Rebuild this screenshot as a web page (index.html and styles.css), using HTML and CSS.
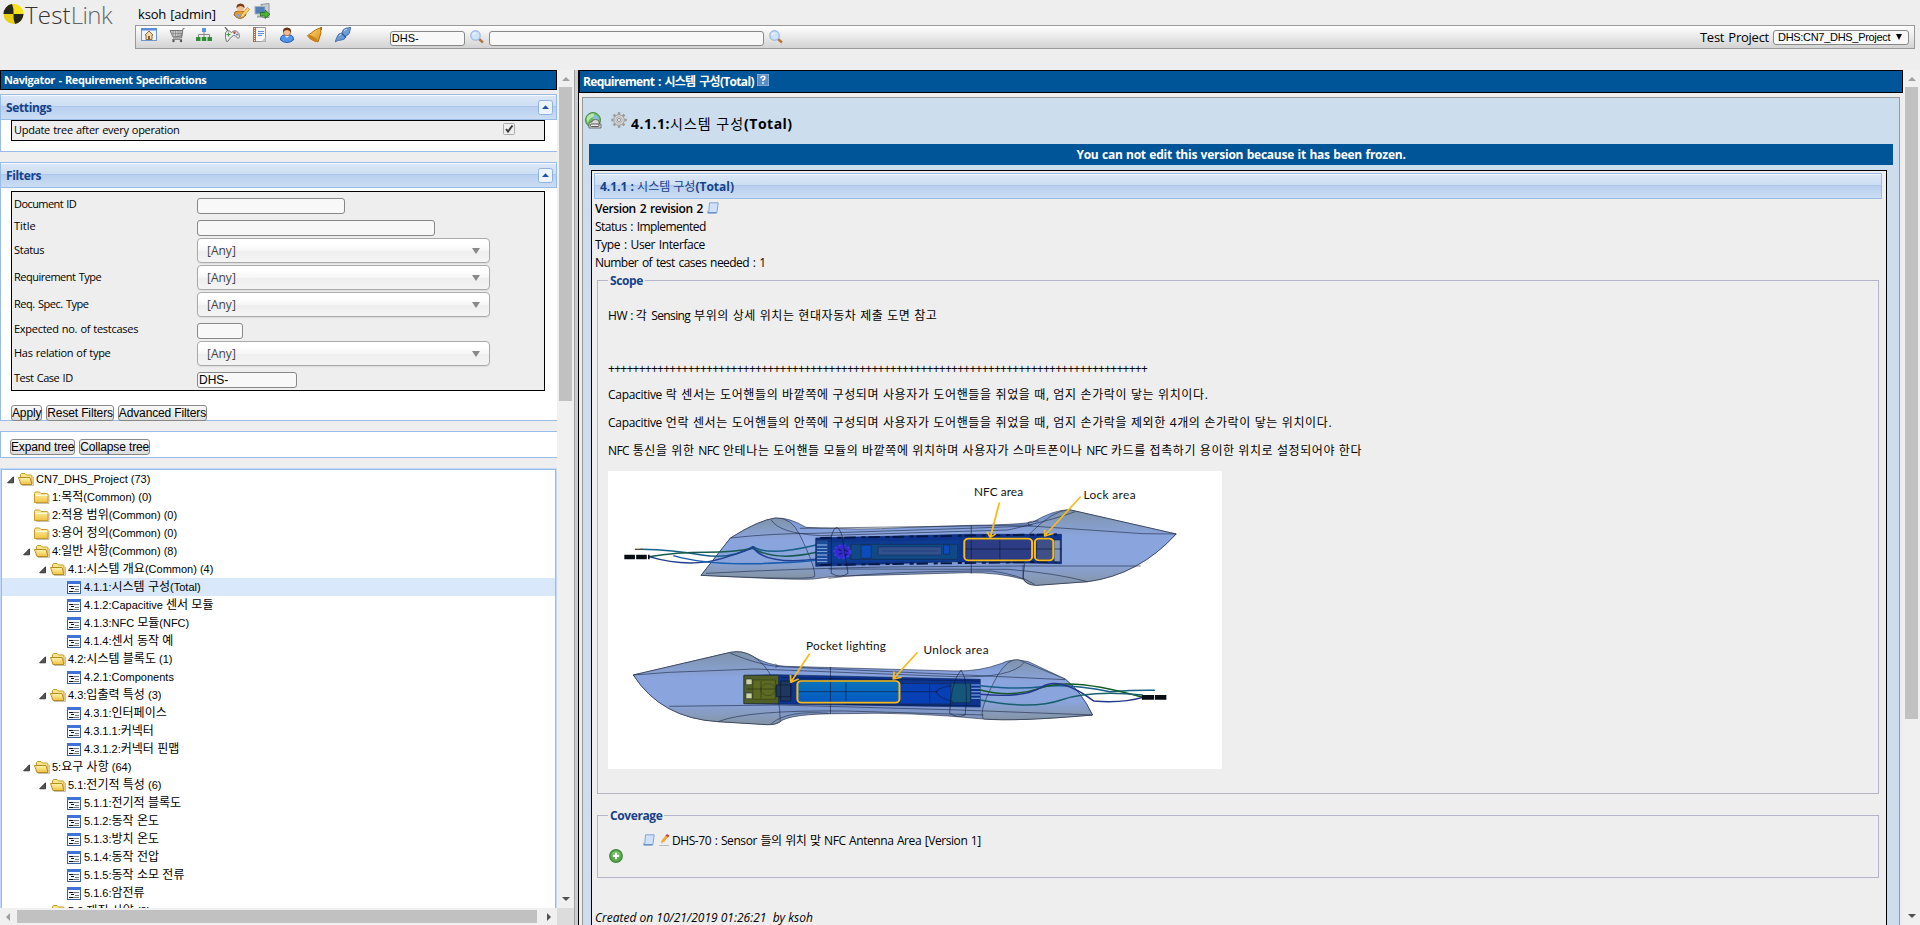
FILE: index.html
```html
<!DOCTYPE html>
<html lang="ko">
<head>
<meta charset="utf-8">
<title>TestLink</title>
<link rel="stylesheet" href="styles.css">
</head>
<body>
<svg width="0" height="0" class="defs">
  <defs>
    <linearGradient id="gFold" x1="0" y1="0" x2="0" y2="1"><stop offset="0" stop-color="#fff3b0"/><stop offset="1" stop-color="#f0c340"/></linearGradient>
    <linearGradient id="gBody" x1="0" y1="0" x2="0" y2="1"><stop offset="0" stop-color="#7391c9"/><stop offset=".45" stop-color="#92abe6"/><stop offset=".75" stop-color="#7f99d2"/><stop offset="1" stop-color="#8496b0"/></linearGradient>
    <linearGradient id="gTip" x1="0" y1="0" x2="0" y2="1"><stop offset="0" stop-color="#7f93a8"/><stop offset=".35" stop-color="#8aa4dd"/><stop offset=".7" stop-color="#8aa4dd"/><stop offset="1" stop-color="#8494a4"/></linearGradient>
    <linearGradient id="gBlue" x1="0" y1="0" x2="0" y2="1"><stop offset="0" stop-color="#0a74b8"/><stop offset="1" stop-color="#0558c4"/></linearGradient>
    <linearGradient id="gBell" x1="0" y1="0" x2="1" y2="1"><stop offset="0" stop-color="#ffe07a"/><stop offset="1" stop-color="#d88a12"/></linearGradient>
    <symbol id="folder" viewBox="0 0 16 14"><path d="M.5 12.500v-9q0-1.500 1.500-1.500h3.500l1.500 1.500h5.500q1.500 0 1.500 1v8z" fill="url(#gFold)" stroke="#c69a2b"/><path d="M1.500 5.500h12" stroke="#fffbe0"/><path d="M2 13.500h13V5" fill="none" stroke="#8a8460" stroke-opacity=".5"/></symbol>
    <symbol id="open" viewBox="0 0 16 14"><path d="M2.500 11.500V3q0-1 1-1.500h3.500l1.500 1.500h4.500q1 0 1 1v8" fill="#fbe58a" stroke="#c69a2b"/><path d="M.5 5.500h11.500l2 7H3z" fill="url(#gFold)" stroke="#b98c20"/><path d="M4 13.500h11.500V5" fill="none" stroke="#8a8460" stroke-opacity=".5"/></symbol>
    <symbol id="doc" viewBox="0 0 14 13"><rect x=".5" y=".5" width="13" height="12" fill="#f4f8ff" stroke="#3a5f9f"/><rect x="0" y="0" width="14" height="3" fill="#3f73d8"/><path d="M2 5.500h4M2 10.500h4M4 7.500h3" stroke="#111"/><path d="M6 5.500h6M8 8.500h4M6 10.500h6" stroke="#777"/></symbol>
    <symbol id="tri" viewBox="0 0 8 8"><path d="M6.500.8v6H.6z" fill="#555" stroke="#222" stroke-width=".8"/></symbol>
    <symbol id="mag" viewBox="0 0 14 14"><path d="M9 9l4 3.500" stroke="#b8763a" stroke-width="2.400"/><circle cx="5.500" cy="5.500" r="4.700" fill="#cfe3fb" stroke="#9dbde8" stroke-width="1.400"/><path d="M3 5q.5-2 2.500-2" stroke="#fff" fill="none"/></symbol>
    <symbol id="scroll" viewBox="0 0 12 12"><path d="M2.500 .8h8.700L9.800 11H.8V9.300h1z" fill="#cfe2fb" stroke="#82a5d2"/><path d="M.8 10.800h8.500" stroke="#557fb5"/></symbol>
    <symbol id="person" viewBox="0 0 16 16"><path d="M1.500 13q0-5 4-5h5q4 0 4 5-3 2.500-6.500 2.500T1.500 13z" fill="#5594e6" stroke="#1d5cb8"/><path d="M5.500 8.500L8 11l2.500-2.500" fill="#dbeaff"/><circle cx="8" cy="5" r="3.700" fill="#f2be93" stroke="#9a5526" stroke-width=".7"/><path d="M4 5.500Q3.500 .8 8 .6q4.500.2 4 4.900-1-2.500-4-2.500T4 5.500z" fill="#6a3413"/></symbol>
  </defs>
</svg>

<header class="top">
  <div class="brand">
    <svg width="24" height="24" viewBox="0 0 24 24"><circle cx="10.500" cy="12" r="10" fill="#e9cf14"/><path d="M10.500 12V2A10 10 0 0 1 20.500 12z" fill="#f6e21c"/><path d="M10.500 12H.5A10 10 0 0 1 9 2.100q2 5 1.500 9.900zM10.500 12h10A10 10 0 0 1 12 21.900q-2-5-1.500-9.900z" fill="#27261c"/></svg>
    <span class="brand-a">Test</span><span class="brand-b">Link</span>
  </div>
  <div class="top-main">
    <div class="user-row">
      <span class="user">ksoh [admin]</span>
      <svg width="17" height="17" viewBox="0 0 17 17"><g transform="translate(-.5 0)"><path d="M1.500 12q0-4 4-4h4q4 0 4 4-3 3.500-6 3.500T1.500 12z" fill="#e29a35" stroke="#a8651a"/><circle cx="8" cy="4.700" r="3.500" fill="#f2be93"/><path d="M4 5.500Q3.500 .8 8 .6q4.500.2 4 4.900-1-2.500-4-2.500T4 5.500z" fill="#7a3c12"/><path d="M3 12q3 4 6 3l-1-4z" fill="#78a8e8"/></g><path d="M7 15l1-3 6.500-7.500 2 2L10 14z" fill="#ffd56a" stroke="#c5780f" stroke-width=".7"/></svg>
      <svg class="logout" width="17" height="17" viewBox="0 0 17 17"><path d="M7 1.500l8-1v14H8z" fill="#c9ced3" stroke="#8d9399"/><rect x="1" y="3.500" width="10" height="7.500" fill="#4f7fb8" stroke="#aab2ba"/><path d="M3 13.500h6" stroke="#9da3a8" stroke-width="2"/><path d="M6.500 9.500h4.500V7l5 4.300-5 4.200v-2.500H6.500z" fill="#4cb03b" stroke="#25701d" stroke-width=".8"/></svg>
    </div>
    <div class="menu">
      <div class="icons">
        <svg viewBox="0 0 16 16"><rect x=".5" y="1.500" width="15" height="12" fill="#eef4fc" stroke="#6f97d3"/><rect x="0" y="1" width="16" height="2.500" fill="#5e8cd6"/><path d="M8 4l-4 4h1v4.500h6V8h1z" fill="#f3d9a6" stroke="#8a5c2b" stroke-width=".9"/><path d="M7 9h2v3.500H7z" fill="#8a5c2b"/></svg>
        <svg viewBox="0 0 16 16"><path d="M15.500 1.500H14L12.500 11H4M1 3.500h12.500L12.800 9 4 10z" fill="#ccc" stroke="#777"/><path d="M4 4v5M6.500 4v5M9 4v5M11 4v5M2 6.500h11" stroke="#888" stroke-width=".8"/><path d="M3 12.500h10" stroke="#888"/><circle cx="4.500" cy="14" r="1.200" fill="#555"/><circle cx="12" cy="14" r="1.200" fill="#555"/></svg>
        <svg viewBox="0 0 16 16"><path d="M8 4v3M2.500 10V7.500h11V10M8 7v3" fill="none" stroke="#8a8a8a"/><rect x="6" y="1" width="4" height="4" fill="#5e96e6"/><path d="M0 10h4.500v4H0zM5.800 10h4.500v4H5.800zM11.500 10H16v4h-4.500z" fill="#2f8d35"/></svg>
        <svg viewBox="0 0 16 16"><path d="M1 0l3 4" stroke="#666" stroke-width="1.300"/><path d="M1.500 5.500q2-2.500 4-1.500l2 1.500q2-2.500 5-1.500 3 2 3 5.500-.5 2.500-2 1.500Q11.500 8 9.500 8.500q-2 1-4 3.500-1.500 3-3 2.500-1.500-3.500-1-9z" fill="#ececec" stroke="#777"/><path d="M2.500 7.500h4M4.500 5.500v4" stroke="#45984a" stroke-width="1.200"/><circle cx="10.500" cy="5.800" r="1.200" fill="#c63d35"/><circle cx="13" cy="7.500" r="1" fill="#4d7bc9"/></svg>
        <svg viewBox="0 0 16 16"><path d="M1.500 .5h12v14h-12z" fill="#f7f7f7" stroke="#999"/><rect x="1" y="0" width="3" height="15" fill="#b5713c"/><path d="M2.500 1v13" stroke="#f0d8c0" stroke-dasharray="1 1"/><path d="M6 4.500h6M6 6.500h6M6 8.500h4" stroke="#5d8fdd"/><path d="M13.500 10l-4 4.500h4z" fill="#ccc"/></svg>
        <svg viewBox="0 0 16 16"><use href="#person"/></svg>
        <svg viewBox="0 0 16 16"><path d="M13.500 .8q-6 2-9 5-2 1.500-4 2.700 2 4.500 10.500 6.500l1-3Q15 6 13.500.8z" fill="url(#gBell)" stroke="#b46e12"/><ellipse cx="6" cy="11.500" rx="5.500" ry="1.800" transform="rotate(35 6 11.500)" fill="#c98418"/><path d="M12.500 1.500l2-1.500v3" stroke="#b46e12" fill="none"/></svg>
        <svg viewBox="0 0 16 16"><path d="M0 15l2-5q1-4 5-4l1-3q4-3 5-2l3-1-1 3.500q0 3.500-3 5l-1.500.5q0 4-4 4L3 13.500z" fill="#6b9ad6" stroke="#3564a8" stroke-width=".8"/><path d="M6.500 6l4.500 4.500" stroke="#2d5794" stroke-width="1.300"/><path d="M4 9q1-2 2.500-2M9 4q1-1.500 3-1.500" stroke="#cfe2fb" fill="none"/></svg>
      </div>
      <span class="field small dhs">DHS-</span>
      <svg class="mag" width="14" height="14"><use href="#mag"/></svg>
      <span class="field small find"></span>
      <svg class="mag" width="14" height="14"><use href="#mag"/></svg>
      <span class="tp">Test Project</span>
      <span class="field project"><span>DHS:CN7_DHS_Project</span><svg width="8" height="8" viewBox="0 0 8 8"><path d="M1 1h6L4 7z"/></svg></span>
    </div>
  </div>
</header>

<div class="frames">
  <aside class="left">
    <div class="left-view">
      <div class="nav">
        <h1 class="bar nav-bar">Navigator - Requirement Specifications</h1>
        <section class="panel settings">
          <h2 class="ph"><span class="s3">Settings</span><svg class="tool" width="15" height="15" viewBox="0 0 15 15"><rect x=".5" y=".5" width="14" height="14" rx="2" fill="#eef4fd" stroke="#8db2e8"/><path d="M4 9h7L7.500 5.300z" fill="#1f4fb0"/></svg></h2>
          <div class="box upd"><span class="s2">Update tree after every operation</span><svg class="check" width="12" height="12" viewBox="0 0 12 12"><rect x=".5" y=".5" width="11" height="11" rx="1" fill="#eee" stroke="#aaa"/><path d="M3 6l2 2.500L9.500 2.500" fill="none" stroke="#3c3c3c" stroke-width="2"/></svg></div>
        </section>
        <section class="panel filters">
          <h2 class="ph"><span class="s3">Filters</span><svg class="tool" width="15" height="15" viewBox="0 0 15 15"><rect x=".5" y=".5" width="14" height="14" rx="2" fill="#eef4fd" stroke="#8db2e8"/><path d="M4 9h7L7.500 5.300z" fill="#1f4fb0"/></svg></h2>
          <div class="box form">
            <div class="row lo"><label class="s5">Document ID</label><span class="field w148"></span></div>
            <div class="row lo"><label>Title</label><span class="field w238"></span></div>
            <div class="row tall"><label class="s2">Status</label><span class="any">[Any]<i></i></span></div>
            <div class="row tall"><label class="s4">Requirement Type</label><span class="any">[Any]<i></i></span></div>
            <div class="row tall"><label class="s4">Req. Spec. Type</label><span class="any">[Any]<i></i></span></div>
            <div class="row lo"><label class="s2">Expected no. of testcases</label><span class="field w46"></span></div>
            <div class="row tall"><label class="s2">Has relation of type</label><span class="any">[Any]<i></i></span></div>
            <div class="row last"><label class="s4">Test Case ID</label><span class="field w100">DHS-</span></div>
          </div>
          <div class="btns"><span class="btn">Apply</span><span class="btn">Reset Filters</span><span class="btn">Advanced Filters</span></div>
        </section>
        <section class="panel treebtns"><div class="btns"><span class="btn">Expand tree</span><span class="btn">Collapse tree</span></div></section>
        <div class="tree">
          <div class="n l0"><svg class="t"><use href="#tri"/></svg><svg class="f"><use href="#open"/></svg>CN7_DHS_Project (73)</div>
          <div class="n l1"><svg class="f"><use href="#folder"/></svg>1:<b>목적</b>(Common) (0)</div>
          <div class="n l1"><svg class="f"><use href="#folder"/></svg>2:<b>적용 범위</b>(Common) (0)</div>
          <div class="n l1"><svg class="f"><use href="#folder"/></svg>3:<b>용어 정의</b>(Common) (0)</div>
          <div class="n l1"><svg class="t"><use href="#tri"/></svg><svg class="f"><use href="#open"/></svg>4:<b>일반 사항</b>(Common) (8)</div>
          <div class="n l2"><svg class="t"><use href="#tri"/></svg><svg class="f"><use href="#open"/></svg>4.1:<b>시스템 개요</b>(Common) (4)</div>
          <div class="n l3 sel"><svg class="d"><use href="#doc"/></svg>4.1.1:<b>시스템 구성</b>(Total)</div>
          <div class="n l3"><svg class="d"><use href="#doc"/></svg>4.1.2:Capacitive <b>센서 모듈</b></div>
          <div class="n l3"><svg class="d"><use href="#doc"/></svg>4.1.3:NFC <b>모듈</b>(NFC)</div>
          <div class="n l3"><svg class="d"><use href="#doc"/></svg>4.1.4:<b>센서 동작 예</b></div>
          <div class="n l2"><svg class="t"><use href="#tri"/></svg><svg class="f"><use href="#open"/></svg>4.2:<b>시스템 블록도</b> (1)</div>
          <div class="n l3"><svg class="d"><use href="#doc"/></svg>4.2.1:Components</div>
          <div class="n l2"><svg class="t"><use href="#tri"/></svg><svg class="f"><use href="#open"/></svg>4.3:<b>입출력 특성</b> (3)</div>
          <div class="n l3"><svg class="d"><use href="#doc"/></svg>4.3.1:<b>인터페이스</b></div>
          <div class="n l3"><svg class="d"><use href="#doc"/></svg>4.3.1.1:<b>커넥터</b></div>
          <div class="n l3"><svg class="d"><use href="#doc"/></svg>4.3.1.2:<b>커넥터 핀맵</b></div>
          <div class="n l1"><svg class="t"><use href="#tri"/></svg><svg class="f"><use href="#open"/></svg>5:<b>요구 사항</b> (64)</div>
          <div class="n l2"><svg class="t"><use href="#tri"/></svg><svg class="f"><use href="#open"/></svg>5.1:<b>전기적 특성</b> (6)</div>
          <div class="n l3"><svg class="d"><use href="#doc"/></svg>5.1.1:<b>전기적 블록도</b></div>
          <div class="n l3"><svg class="d"><use href="#doc"/></svg>5.1.2:<b>동작 온도</b></div>
          <div class="n l3"><svg class="d"><use href="#doc"/></svg>5.1.3:<b>방치 온도</b></div>
          <div class="n l3"><svg class="d"><use href="#doc"/></svg>5.1.4:<b>동작 전압</b></div>
          <div class="n l3"><svg class="d"><use href="#doc"/></svg>5.1.5:<b>동작 소모 전류</b></div>
          <div class="n l3"><svg class="d"><use href="#doc"/></svg>5.1.6:<b>암전류</b></div>
          <div class="n l2"><svg class="f"><use href="#open"/></svg>5.2:<b>재질 사양</b> (3)</div>
        </div>
      </div>
      <div class="vs"><i class="up"></i><div class="thumb left-thumb"></div><i class="down"></i></div>
    </div>
    <div class="hs-row"><div class="hs"><i class="lt"></i><div class="thumb"></div><i class="rt"></i></div><div class="corner"></div></div>
  </aside>
  <div class="split"></div>
  <main class="right">
    <div class="content">
      <h1 class="bar req-bar"><span>Requirement : 시스템 구성(Total)</span><svg width="12" height="12" viewBox="0 0 12 12"><rect width="12" height="12" fill="#5c8cc4" stroke="#a9c4e4"/><path d="M4 4.300Q4 2.300 6 2.300t2 1.700Q8 5 6 6v1" fill="none" stroke="#fff" stroke-width="1.500"/><rect x="5.200" y="8.300" width="1.600" height="1.600" fill="#fff"/></svg></h1>
      <div class="work">
        <div class="head">
          <svg width="17" height="17" viewBox="0 0 17 17"><circle cx="8" cy="8" r="7.500" fill="#69b95f" stroke="#4a8c4a"/><path d="M2 5q3-4 7-3.500 1 3-2 4T3 11Q1 8 2 5z" fill="#b9e6b0"/><path d="M9 3q4 0 5 4l-3 2-3-2z" fill="#8dbbe6"/><path d="M4 16v-4q0-2 2-2h1q0-2.500 3.500-2.500T14 10v2h2v4z" fill="#d7dad7" stroke="#555" stroke-width=".8"/><rect x="5.500" y="12" width="8.500" height="2.500" rx="1" fill="#eee" stroke="#555"/></svg>
          <svg class="gear" width="16" height="16" viewBox="0 0 16 16"><g stroke="#999" stroke-width="2.600"><path d="M8 .3v15.400M.3 8h15.400M2.600 2.600l10.800 10.800M13.400 2.600L2.600 13.400"/></g><circle cx="8" cy="8" r="5.300" fill="#d8d8d8" stroke="#a5a5a5"/><circle cx="8" cy="8" r="3.200" fill="#e6e6e6" stroke="#b0b0b0"/><circle cx="8" cy="8" r="1.700" fill="#cde" stroke="#888" stroke-width=".8"/></svg>
          <span>4.1.1:<b>시스템 구성</b>(Total)</span>
        </div>
        <div class="frozen">You can not edit this version because it has been frozen.</div>
        <div class="spec">
          <h2 class="ph sh">4.1.1 : <b>시스템 구성</b>(Total)</h2>
          <div class="info ver"><span>Version 2 revision 2</span><svg width="12" height="12"><use href="#scroll"/></svg></div>
          <div class="info">Status : Implemented</div>
          <div class="info ty">Type : User Interface</div>
          <div class="info">Number of test cases needed : 1</div>
          <fieldset class="scope">
            <legend>Scope</legend>
            <p class="hw"><span class="en">HW : </span>각 <span class="en2">Sensing</span> 부위의 상세 위치는 현대자동차 제출 도면 참고</p>
            <p class="plus">++++++++++++++++++++++++++++++++++++++++++++++++++++++++++++++++++++++++++++++++++++++++</p>
            <p class="k"><span class="en">Capacitive</span> 락 센서는 도어핸들의 바깥쪽에 구성되며 사용자가 도어핸들을 쥐었을 때, 엄지 손가락이 닿는 위치이다.</p>
            <p class="k"><span class="en">Capacitive</span> 언락 센서는 도어핸들의 안쪽에 구성되며 사용자가 도어핸들을 쥐었을 때, 엄지 손가락을 제외한 4개의 손가락이 닿는 위치이다.</p>
            <p class="k nfc"><span class="en2">NFC</span> 통신을 위한 <span class="en2">NFC</span> 안테나는 도어핸들 모듈의 바깥쪽에 위치하며 사용자가 스마트폰이나 <span class="en2">NFC</span> 카드를 접촉하기 용이한 위치로 설정되어야 한다</p>
            <svg class="pic" width="614" height="298" viewBox="0 0 614 298">
              <g transform="scale(.40816 .33333) translate(-20 -18)" fill="none" stroke="#1c2640" stroke-width="1.600" stroke-linejoin="round">
                <!-- upper handle -->
                <path d="M248 331L320 219Q390 165 430 159Q465 157 505 187Q640 196 740 188L910 181Q1010 180 1060 172Q1110 135 1150 134L1412 207Q1320 330 1195 350L1070 361Q1045 360 1037 343Q980 322 900 323Q700 330 600 333Q560 335 523 342Q490 346 248 331z" fill="url(#gBody)"/>
                <path d="M1050 210Q1110 135 1150 134L1412 207Q1320 330 1195 350L1070 361Q1040 360 1037 335z" fill="url(#gTip)"/>
                <path d="M248 331L320 219Q390 165 430 159Q470 157 490 210Q530 310 526 335Q510 346 248 331z" fill="url(#gTip)"/>
                <path d="M320 219Q420 205 530 205L900 190 1055 183 1330 206 1412 207M420 165Q440 205 540 212L1000 195Q1110 165 1165 140M260 325Q500 310 700 306L1037 303H1325M560 312L1000 313Q1120 325 1195 350M490 190L1060 180M560 340Q700 318 960 318Q1030 330 1065 358"/>
                <g stroke-width="4.500"><path d="M100 253Q180 255 250 270T375 245Q410 275 530 240" stroke="#176089"/><path d="M120 275Q190 262 260 262T375 250Q430 290 530 262" stroke="#175a50"/><path d="M120 275Q220 310 300 280T375 245Q400 300 530 283" stroke="#243f90"/><path d="M180 272Q260 300 380 296T530 285" stroke="#1a5cae"/></g>
                <path d="M60 276h62" stroke="#080c14" stroke-width="14" stroke-dasharray="26 3"/><path d="M86 253h18" stroke="#5c4a30" stroke-width="4"/>
                <path d="M529 219L900 208H1131V296L860 290 529 304z" fill="#0e338c" stroke="#07205c"/>
                <path d="M530 225h30v72h-30z" fill="#1c4c9c"/><path d="M532 240h25M532 250h25M532 260h25M532 270h25M532 280h25M532 290h25" stroke="#9cb8ec" stroke-width="2.500"/>
                <path d="M560 232L880 226V288L560 292z" fill="#0d3c96" stroke="#103c80"/><path d="M615 238h262v45H615z" fill="#0f4a86"/><path d="M682 246h155v24H682z" fill="#33528d" stroke="#142d60"/><path d="M690 258h140" stroke="#1c3470"/>
                <path d="M640 240h25v40h-25zM842 240h15v28h-15z" fill="#0b4bbb"/>
                <circle cx="594" cy="260" r="20" fill="#332ccc" stroke="#4a38e8" stroke-width="4" stroke-dasharray="7 5"/><path d="M584 252l8 6M600 254l8 6M586 268l8-4M600 272l6-6" stroke="#1a1680" stroke-width="4"/>
                <path d="M540 219L1120 208M540 300L1120 290" stroke="#061848" stroke-width="6" stroke-dasharray="28 14 10 7"/>
                <path d="M897 222h160v62H897z" fill="#2c3d86"/><path d="M1070 222h40v62h-40z" fill="#3d5088"/><path d="M1113 225h15v65h-15z" fill="#8499bd"/>
                <path d="M567 325V215Q580 160 594 215L608 325Q590 342 567 325zM910 181V326M980 224v62M897 252h235M1037 300v42M1055 183q-20-15 20-15" stroke="#0c1430"/>
                <g stroke="#f8bb19" stroke-width="5"><rect x="893" y="221" width="166" height="65" rx="10"/><rect x="1066" y="221" width="45" height="65" rx="10"/><path d="M979 112L957 216M949 200l7 17 14-10M1178 95L1090 212M1090 194v19l20-7" stroke-width="4.500"/></g>
                <!-- lower handle -->
                <path d="M82 630L320 562Q350 555 375 574Q410 600 455 604L870 618Q930 620 985 595Q1010 578 1050 590L1140 642Q1180 680 1207 750Q1020 770 940 762Q760 740 600 746Q460 745 440 772Q430 780 410 779L290 770Q150 760 82 630z" fill="url(#gBody)"/>
                <path d="M82 630L320 562Q350 555 375 574Q440 620 442 770Q430 780 410 779L290 770Q150 760 82 630z" fill="url(#gTip)"/><path d="M940 762Q925 740 975 630Q1000 580 1025 584L1140 642Q1180 680 1207 750Q1020 770 940 762z" fill="url(#gTip)"/>
                <path d="M82 630L170 622 380 612 870 635Q1010 640 1040 592M170 724L440 720 880 735 1207 750M320 565Q390 600 440 605L860 628 1140 644M290 770Q360 735 600 738L940 750M420 776Q460 735 560 745M430 597q10 8 0 10"/>
                <path d="M353 631L430 629 932 643V726L600 720 353 716z" fill="#0d3590" stroke="#0a2258"/>
                <path d="M353 631h85v85h-85z" fill="#4f5f25"/><path d="M358 642h15v17h-15zM358 684h15v17h-15z" fill="#cbd4a0"/><path d="M375 645h55v58h-55z" fill="#5c6a24" stroke="#30390c"/><circle cx="412" cy="674" r="18" stroke="#30401a"/><path d="M360 672h75M395 648v52" stroke="#28300e"/>
                <path d="M432 660h36v35h-36zM443 648h25v60h-25z" fill="#203760" stroke="#091428"/>
                <path d="M483 648h250v64H483z" fill="url(#gBlue)"/><path d="M735 655l130 2v60H735z" fill="#0640b4"/><path d="M860 655h48v58h-48z" fill="#15577a"/>
                <path d="M910 660h22M910 670h22M910 680h22M910 690h22M910 700h22" stroke="#8fb2ec" stroke-width="3"/>
                <path d="M565 606V746M603 652v56M488 680h340M808 655v58M862 662Q820 670 825 684T865 710M445 638L930 648M600 718L930 722M885 615Q860 650 857 745Q875 760 895 750Q905 650 885 615" stroke="#0a173c"/>
                <g stroke-width="4.500"><path d="M932 662Q1020 675 1083 665T1250 680Q1310 675 1360 676" stroke="#176089"/><path d="M932 675Q1010 700 1083 668T1330 697" stroke="#155c28"/><path d="M932 688Q1040 700 1083 666T1210 708Q1280 715 1330 697" stroke="#26368c"/><path d="M932 705Q1060 735 1130 705T1330 690" stroke="#17606c"/></g>
                <path d="M1328 697h60" stroke="#080c14" stroke-width="14" stroke-dasharray="30 2"/>
                <g stroke="#f8bb19" stroke-width="5"><rect x="484" y="648" width="250" height="65" rx="10"/><path d="M514 566L469 650M467 630l1 22 19-10M778 562L720 640M721 620l-2 22 20-5" stroke-width="4.500"/></g>
              </g>
              <g class="cap"><text x="366" y="24.500" textLength="49">NFC area</text><text x="475.500" y="28" textLength="52">Lock area</text><text x="198" y="178.500" textLength="80">Pocket lighting</text><text x="315.500" y="183" textLength="65">Unlock area</text></g>
            </svg>
          </fieldset>
          <fieldset class="coverage">
            <legend>Coverage</legend>
            <div class="cov"><svg width="12" height="12"><use href="#scroll"/></svg><svg class="pn" width="11" height="12" viewBox="0 0 11 12"><path d="M0 11.500h10" stroke="#bbb"/><path d="M2 9.500l.5-3L7 1l2.500 1.500L5 8z" fill="#f2a93b"/><path d="M6.500 1.500L8 0l2.500 1.500L9 3.500z" fill="#c24a38"/></svg><span>DHS-70 : Sensor 들의 위치 맞 NFC Antenna Area [Version 1]</span></div>
            <svg class="add" width="14" height="14" viewBox="0 0 14 14"><circle cx="7" cy="7" r="6.300" fill="#58aa48" stroke="#3d8a36" stroke-width="1.200"/><path d="M2.300 6Q3 2.500 7 2.200T11.700 6z" fill="#8fd07f" opacity=".6"/><path d="M7 3.800v6.400M3.800 7h6.400" stroke="#fff" stroke-width="2.200"/></svg>
          </fieldset>
          <div class="created">Created on 10/21/2019 01:26:21 &nbsp;by ksoh</div>
        </div>
      </div>
    </div>
    <div class="vs"><i class="up"></i><div class="thumb right-thumb"></div><i class="down"></i></div>
  </main>
</div>
</body>
</html>
```
FILE: styles.css
```css
* { box-sizing: border-box; }
body { margin: 0; width: 1920px; height: 925px; overflow: hidden; background: #eee; color: #000; font: 12px/18px "Open Sans", "Noto Sans CJK KR", sans-serif; }
h1, h2, p { margin: 0; }
svg { display: block; flex: none; }
.defs { position: absolute; }

.top { display: flex; height: 70px; }
.brand { width: 135px; padding: 2px 0 0 3px; display: flex; height: 28px; font-size: 24px; font-weight: 300; line-height: 25px; }
.brand-a { color: #333; letter-spacing: .2px; margin-left: -2px; }
.brand-b { color: #666; letter-spacing: -.6px; }
.top-main { flex: 1; padding-right: 5px; }
.user-row { height: 25px; display: flex; padding: 3px 0 0 3px; }
.user { width: 95px; font-size: 13px; font-weight: 500; letter-spacing: -.2px; word-spacing: 1px; line-height: 22px; }
.logout { margin-left: 4px; }
.menu { height: 24px; border: 1px solid #999; background: linear-gradient(#fff, #d3d3d3); display: flex; align-items: center; padding: 0 5px; }
.icons { display: flex; gap: 11.700px; margin-right: 39px; padding-bottom: 4px; }
.icons svg { width: 16px; height: 16px; }
.field { display: inline-flex; align-items: center; height: 16px; background: #f8f8f8; border: 1px solid #888; border-radius: 3px; font: 12px/14px "Liberation Sans", sans-serif; padding-left: 1px; }
.small { height: 15px; margin-top: 3px; font-size: 11px; line-height: 12px; padding-bottom: 1px; }
.dhs { width: 75px; margin-right: 5px; }
.find { width: 275px; margin-left: 5px; margin-right: 5px; }
.tp { margin-left: auto; font-size: 13px; letter-spacing: -.25px; word-spacing: 1px; margin-right: 4px; }
.project { width: 136px; height: 15px; font-size: 11px; letter-spacing: -.3px; padding: 0 5px 0 4px; justify-content: space-between; }

.frames { display: flex; height: 855px; }
.left { width: 574px; display: flex; flex-direction: column; }
.left-view { display: flex; height: 838px; }
.nav { width: 557px; height: 838px; overflow: hidden; }
.bar { background: #005498; color: #fff; border: 1px solid #000; font-weight: 700; }
.nav-bar { height: 20px; font-size: 11px; line-height: 18px; padding-left: 3px; letter-spacing: -.41px; word-spacing: 1px; }
.panel { background: #fff; border: solid #99bbe8; border-width: 0 0 1px 1px; }
.ph { height: 26px; border: 1px solid #99bbe8; margin-left: -1px; box-shadow: inset 0 1px #f5f9ff; background: linear-gradient(#dae7f6 0 1px, #cddef3 11px, #abc7ec 11px 12px, #b8cfee 12px, #cbddf3); color: #15428b; font-size: 12px; font-weight: 700; line-height: 26px; padding-left: 5px; display: flex; }
.s3 { letter-spacing: -.35px; }
.tool { margin: 5px 3px 0 auto; }
.settings { margin-top: 4px; height: 58px; }
.box { margin-left: 10px; width: 534px; background: #eee; border: 1px solid #000; font-size: 11px; }
.upd { height: 21px; padding-left: 2px; display: flex; align-items: center; }
.upd span { padding-bottom: 1px; }
.check { margin-left: auto; margin-right: 29px; margin-bottom: 3px; }
.s2 { letter-spacing: -.28px; word-spacing: .6px; }
.s4 { letter-spacing: -.5px; word-spacing: 1px; }
.s5 { letter-spacing: -.58px; word-spacing: 1px; }
.filters { margin-top: 10px; height: 259px; }
.form { margin-top: 3px; height: 200px; padding: 1px 0 0 2px; }
.row { display: flex; align-items: center; height: 22px; }
.row label { width: 183px; }
.row.tall { height: 27px; }
.row.tall label { padding-bottom: 1px; }
.row.last { height: 23px; }
.row.last label { padding-bottom: 2px; }
.lo .field { margin-top: 4px; }
.last .field { margin-top: 2px; }
.w148 { width: 148px; } .w238 { width: 238px; } .w46 { width: 46px; } .w100 { width: 100px; }
.any { width: 293px; height: 25px; border: 1px solid #aaa; border-radius: 4px; background: linear-gradient(#fff 20%, #f6f6f6 50%, #eee 52%, #f4f4f4); font-size: 12px; color: #444; line-height: 23px; padding: 0 9px; display: flex; justify-content: space-between; align-items: center; box-shadow: 0 1px 1px #ddd; }
.any i { border: 4px solid transparent; border-top: 6px solid #888; border-bottom: 0; }
.btns { display: flex; gap: 4px; padding: 14px 0 0 10px; }
.btn { height: 16px; padding: 0; border: 1px solid #888; border-radius: 3px; background: linear-gradient(#fafafa, #ddd); font: 12px/14px "Liberation Sans", sans-serif; letter-spacing: -.14px; }
.treebtns { margin-top: 10px; height: 27px; border-top-width: 1px; }
.treebtns .btns { padding: 7px 0 0 9px; }
.tree { margin-top: 10px; height: 460px; background: #fff; border: 1px solid #c3d9f7; box-shadow: inset 1px 1px #99bbe8, inset -1px 0 #99bbe8; padding: 1px 1px 0; }
.n { height: 18px; display: flex; align-items: center; font: 11px/18px "Liberation Sans", "Noto Sans CJK KR", sans-serif; white-space: pre; }
.n b { font-weight: 400; font-size: 12px; line-height: 18px; }
.n .t { width: 8px; height: 8px; margin-left: -11px; margin-right: 3px; margin-top: 1px; }
.n .f { width: 16px; height: 14px; margin-right: 2px; }
.n .d { width: 14px; height: 13px; margin-right: 3px; }
.l0 { padding-left: 16px; } .l1 { padding-left: 32px; } .l2 { padding-left: 48px; } .l3 { padding-left: 65px; }
.sel { background: #d9e8fb; }

.vs { width: 17px; background: #f0f0f0; display: flex; flex-direction: column; align-items: center; padding: 7px 0; }
.thumb { background: #c1c1c1; }
.vs .thumb { width: 13px; margin-top: 6px; }
.left-thumb { height: 314px; }
.right-thumb { height: 632px; }
.up { border: 4px solid transparent; border-bottom-color: #a0a0a0; border-top: 0; }
.down { border: 4px solid transparent; border-top-color: #505050; border-bottom: 0; margin-top: auto; }
.hs-row { display: flex; height: 17px; }
.hs { width: 557px; background: #f0f0f0; display: flex; align-items: center; padding: 0 6px; }
.hs .thumb { width: 520px; height: 13px; margin: 0 auto 0 7px; }
.lt { border: 4px solid transparent; border-right-color: #a0a0a0; border-left: 0; }
.rt { border: 4px solid transparent; border-left-color: #505050; border-right: 0; }
.corner { width: 17px; background: #dcdcdc; }
.split { width: 5px; background: #cdcdcd; border-left: 1px solid #a0a0a0; border-right: 1px solid #000; }

.right { flex: 1; display: flex; overflow: hidden; }
.content { flex: 1; }
.req-bar { height: 23px; padding-left: 3px; line-height: 22px; font-size: 12px; letter-spacing: -.68px; word-spacing: 1.300px; display: flex; gap: 3px; }
.req-bar svg { margin-top: 3px; }
.work { margin: 4px 3px 0 3px; height: 840px; background: #cde; border: 1px solid #999; padding: 0 6px; }
.head { height: 46px; display: flex; align-items: center; margin-left: -4px; font-size: 14px; font-weight: 700; letter-spacing: .5px; padding-top: 1px; }
.head b, .sh b { font-weight: 400; }
.head b { letter-spacing: 1px; }
.head svg { margin-bottom: 3px; }
.gear { margin: 0 4px 0 9px; }
.head span { padding-top: 4px; }
.frozen { height: 21px; background: #005498; color: #fff; text-align: center; font-weight: 700; letter-spacing: -.24px; word-spacing: .6px; line-height: 21px; }
.spec { margin: 5px 6px 0 2px; height: 760px; background: #eee; border: 1px solid #000; padding: 2px; }
.sh { margin: 0 2px 1px 0; line-height: 26px; font-size: 12px; padding-left: 5px; white-space: pre; }
.info { height: 18px; padding-left: 1px; letter-spacing: -.55px; word-spacing: 1.200px; }
.ty { letter-spacing: -.42px; }
.ver { font-weight: 600; letter-spacing: -.42px; display: flex; gap: 4px; }
.ver svg { margin-top: 2px; }
fieldset { margin: 0; padding: 0; min-width: 0; position: relative; border: 1px solid #b4b4c8; }
legend { position: absolute; top: -9px; left: 10px; padding: 0 2px; background: #eee; color: #15428b; font-weight: 700; letter-spacing: -.4px; line-height: 18px; }
.scope { margin: 8px 5px 0 3px; height: 514px; padding: 26px 0 0 10px; white-space: nowrap; }
.hw { letter-spacing: .6px; }
.plus { margin-top: 35px; letter-spacing: -.736px; height: 18px; }
.k { margin-top: 10px; letter-spacing: .63px; height: 18px; }
.plus + .k { margin-top: 8px; }
.nfc { letter-spacing: .59px; }
.en { letter-spacing: -.3px; }
.en2 { letter-spacing: -.6px; }
.pic { margin-top: 11px; background: #fff; }
.cap { font: 11.800px Lato, sans-serif; fill: #111; }
.coverage { margin: 21px 5px 0 3px; height: 63px; padding: 16px 0 0 11px; }
.cov { height: 17px; display: flex; padding-left: 34px; letter-spacing: -.42px; word-spacing: .8px; }
.cov svg { margin-top: 2px; }
.cov .pn { margin: 2px 2px 0 4px; }
.created { margin-top: 31px; padding-left: 1px; font-style: italic; white-space: pre; }
```
